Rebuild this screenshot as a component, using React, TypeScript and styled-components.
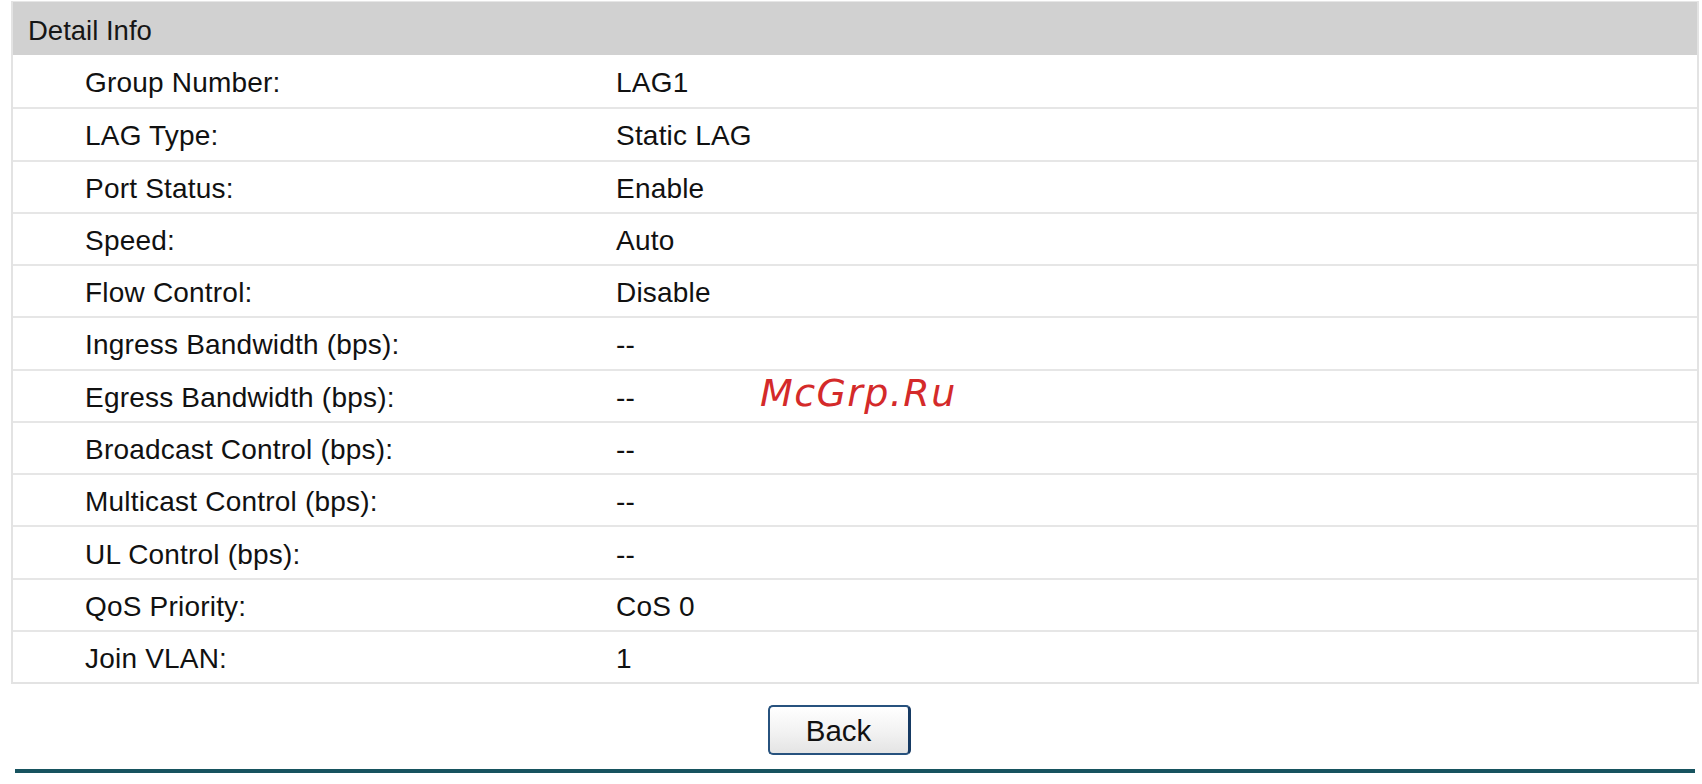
import React from 'react';
import styled, { createGlobalStyle } from 'styled-components';

const GlobalStyle = createGlobalStyle`
  html, body {
    margin: 0;
    padding: 0;
    background: #ffffff;
  }
  body {
    font-family: "Liberation Sans", Arial, sans-serif;
    color: #111111;
  }
`;

const Page = styled.div`
  position: relative;
  width: 1702px;
  height: 784px;
  padding: 1px 3px 0 11px;
  box-sizing: border-box;
  display: flex;
  flex-direction: column;
`;

const Panel = styled.div`
  border: 2px solid #e3e3e3;
  border-top-width: 0;
  background: #ffffff;
`;

const Header = styled.div`
  height: 54px;
  box-sizing: border-box;
  background: #d1d1d1;
  border-top: 1px solid #e6e6e6;
  display: flex;
  align-items: center;
  padding: 5px 0 0 15px;
  font-size: 27.5px;
  color: #161616;
`;

const Row = styled.div<{ $first?: boolean }>`
  height: 52.27px;
  box-sizing: border-box;
  border-top: ${(p) => (p.$first ? '0' : '2px solid #e6e6e6')};
  display: grid;
  grid-template-columns: 531px 1fr;
  align-items: center;
  padding: 4px 0 0 72px;
  font-size: 28px;
  letter-spacing: 0.2px;
`;

const Label = styled.span`
  white-space: nowrap;
`;

const Value = styled.span`
  white-space: nowrap;
`;

const ButtonBar = styled.div`
  display: flex;
  justify-content: center;
  padding: 21px 32px 0 0;
`;

const BackButton = styled.button`
  width: 143px;
  height: 50px;
  box-sizing: border-box;
  border: 2px solid #27527e;
  border-right: 3px solid #163a63;
  border-radius: 5px;
  background: linear-gradient(#ffffff, #f2f2f2 55%, #e4e4e4);
  font-family: "Liberation Sans", Arial, sans-serif;
  font-size: 29.5px;
  color: #111111;
  padding: 2px 0 0 0;
  cursor: pointer;
`;

const Rule = styled.div`
  margin: 14px 4px 0 4px;
  height: 4px;
  background: #17535f;
`;

const Watermark = styled.div`
  position: absolute;
  left: 760px;
  top: 371px;
  font-family: "DejaVu Sans", sans-serif;
  font-style: italic;
  font-size: 38px;
  letter-spacing: 1.4px;
  color: #d42a2a;
  pointer-events: none;
`;

const rows: [string, string][] = [
  ['Group Number:', 'LAG1'],
  ['LAG Type:', 'Static LAG'],
  ['Port Status:', 'Enable'],
  ['Speed:', 'Auto'],
  ['Flow Control:', 'Disable'],
  ['Ingress Bandwidth (bps):', '--'],
  ['Egress Bandwidth (bps):', '--'],
  ['Broadcast Control (bps):', '--'],
  ['Multicast Control (bps):', '--'],
  ['UL Control (bps):', '--'],
  ['QoS Priority:', 'CoS 0'],
  ['Join VLAN:', '1'],
];

export default function App() {
  return (
    <>
      <GlobalStyle />
      <Page>
        <Panel>
          <Header>Detail Info</Header>
          {rows.map(([label, value], i) => (
            <Row key={label} $first={i === 0}>
              <Label>{label}</Label>
              <Value>{value}</Value>
            </Row>
          ))}
        </Panel>
        <ButtonBar>
          <BackButton>Back</BackButton>
        </ButtonBar>
        <Rule />
        <Watermark>McGrp.Ru</Watermark>
      </Page>
    </>
  );
}
